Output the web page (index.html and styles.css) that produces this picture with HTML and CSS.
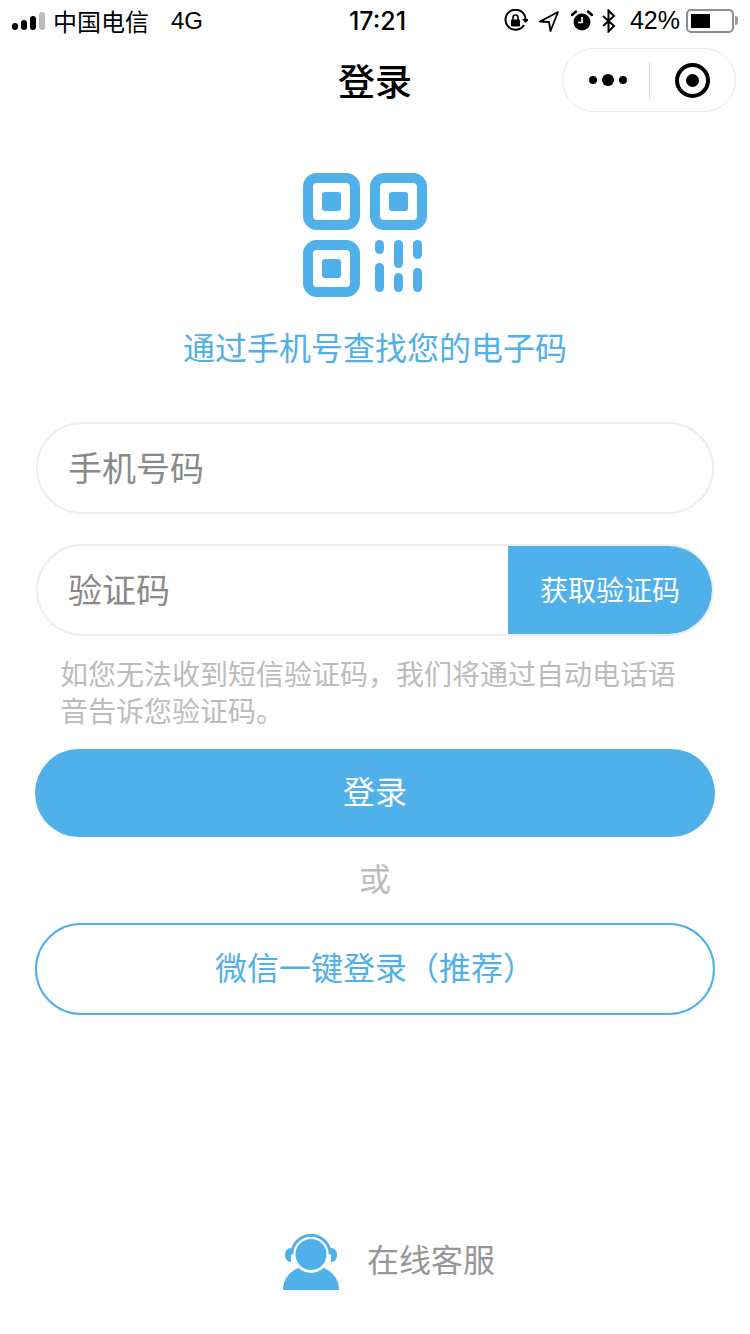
FILE: index.html
```html
<!DOCTYPE html>
<html lang="zh-CN">
<head>
    <meta charset="UTF-8">
    <title>登录</title>
    <link rel="stylesheet" href="styles.css">
</head>
<body>
    <!-- 状态栏 -->
    <div class="status-bar">
        <div class="status-left">
            <svg class="signal" width="34" height="20" viewBox="0 0 34 20">
                <rect x="0" y="12" width="6" height="7" rx="3" fill="#000"/>
                <rect x="9" y="9" width="6" height="10" rx="3" fill="#000"/>
                <rect x="18" y="5" width="6" height="14" rx="3" fill="#000"/>
                <rect x="27" y="1" width="6" height="18" rx="3" fill="#bbb"/>
            </svg>
            <span class="carrier">中国电信</span>
            <span class="network">4G</span>
        </div>
        <div class="status-time">17:21</div>
        <div class="status-right">
            <svg width="24" height="24" viewBox="0 0 24 24">
                <path d="M20 16A10 10 0 1 1 21.500 10" fill="none" stroke="#000" stroke-width="2"/>
                <path d="M18 10h7l-3.500 4z" fill="#000"/>
                <rect x="7" y="10.500" width="9" height="7" rx="1" fill="#000"/>
                <path d="M9 11V8.500a2.500 2.500 0 0 1 5 0V11" fill="none" stroke="#000" stroke-width="1.600"/>
            </svg>
            <svg class="icon-loc" width="20" height="22" viewBox="0 0 20 22">
                <path d="M19 2 1 11.500l9 .5 1.500 9z" fill="none" stroke="#000" stroke-width="1.800" stroke-linejoin="round"/>
            </svg>
            <svg class="icon-alarm" width="22" height="22" viewBox="0 0 22 22">
                <circle cx="11" cy="12" r="8.500" fill="#000"/>
                <path d="M11 7v5.500H7" fill="none" stroke="#fff" stroke-width="1.600"/>
                <path d="M1 5 5 1.500M21 5 17 1.500" stroke="#000" stroke-width="2.400" stroke-linecap="round"/>
            </svg>
            <svg class="icon-bt" width="14" height="24" viewBox="0 0 14 24">
                <path d="M1 7 12 17 6.500 22.500V1.500L12 7 1 17" fill="none" stroke="#000" stroke-width="2"/>
            </svg>
            <span class="battery-text">42%</span>
            <div class="battery">
                <div class="battery-level"></div>
            </div>
            <div class="battery-tip"></div>
        </div>
    </div>

    <!-- 导航栏 -->
    <div class="nav-bar">
        <h1 class="nav-title">登录</h1>
        <div class="capsule">
            <div class="capsule-dots">
                <span class="dot"></span>
                <span class="dot dot-big"></span>
                <span class="dot"></span>
            </div>
            <div class="capsule-line"></div>
            <div class="capsule-target">
                <span class="target-inner"></span>
            </div>
        </div>
    </div>

    <div class="logo-block">
        <svg class="qr-logo" width="124" height="124" viewBox="0 0 124 124">
            <g fill="none" stroke="#4fb0ea" stroke-width="10">
                <rect x="5" y="5" width="47" height="47" rx="9"/>
                <rect x="72" y="5" width="47" height="47" rx="9"/>
                <rect x="5" y="72" width="47" height="47" rx="9"/>
            </g>
            <g fill="#4fb0ea">
                <rect x="19" y="19" width="19" height="19" rx="3"/>
                <rect x="86" y="19" width="19" height="19" rx="3"/>
                <rect x="19" y="86" width="19" height="19" rx="3"/>
                <rect x="72" y="67" width="9" height="14" rx="4.500"/>
                <rect x="72" y="90" width="9" height="29" rx="4.500"/>
                <rect x="91" y="67" width="9" height="28" rx="4.500"/>
                <rect x="91" y="100" width="9" height="19" rx="4.500"/>
                <rect x="110" y="67" width="9" height="19" rx="4.500"/>
                <rect x="110" y="95" width="9" height="24" rx="4.500"/>
            </g>
        </svg>
        <p class="logo-text">通过手机号查找您的电子码</p>
    </div>

    <form class="login-form">
        <div class="field">
            <span class="placeholder">手机号码</span>
        </div>
        <div class="field field-code">
            <span class="placeholder">验证码</span>
            <button type="button" class="code-btn">获取验证码</button>
        </div>
        <p class="hint">如您无法收到短信验证码，我们将通过自动电话语音告诉您验证码。</p>
        <button type="button" class="btn btn-primary">登录</button>
        <div class="or">或</div>
        <button type="button" class="btn btn-outline">微信一键登录（推荐）</button>
    </form>

    <div class="service">
        <svg width="56" height="56" viewBox="0 0 56 56">
            <path d="M0 56C0 44 8 36 18 33H38C48 36 56 44 56 56z" fill="#4fb0ea"/>
            <circle cx="28" cy="20.500" r="18.500" fill="#fff"/>
            <circle cx="28" cy="20.500" r="15.500" fill="#4fb0ea"/>
            <path d="M8.800 20.500a19.200 19.200 0 0 1 38.400 0" fill="none" stroke="#4fb0ea" stroke-width="3"/>
            <path d="M8 14v14C4 28 2 24.500 2 21S4 14 8 14z" fill="#4fb0ea"/>
            <path d="M48 14v14c4 0 6-3.500 6-7s-2-7-6-7z" fill="#4fb0ea"/>
        </svg>
        <span class="service-text">在线客服</span>
    </div>
</body>
</html>
```

FILE: styles.css
```css
/* 页面 */
* {
    box-sizing: border-box;
}
body {
    margin: 0;
    width: 750px;
    height: 1334px;
    overflow: hidden;
    background-color: #fff;
    font-family: "Noto Sans CJK SC", "Noto Sans", sans-serif;
    color: #000;
}

/* 状态栏 */
.status-bar {
    display: flex;
    justify-content: space-between;
    align-items: center;
    height: 40px;
    padding: 1px 12px 0;
    position: relative;
    font-family: "Liberation Sans", "Noto Sans CJK SC", sans-serif;
    font-size: 24px;
}
.status-left {
    display: flex;
    align-items: center;
}
.carrier {
    margin-left: 7px;
    font-family: "Noto Sans CJK SC", sans-serif;
}
.network {
    margin-left: 22px;
}
.status-time {
    position: absolute;
    left: 5px;
    right: 0;
    text-align: center;
    font-family: Inter, sans-serif;
    font-size: 25px;
    font-weight: 500;
}
.status-right {
    display: flex;
    align-items: center;
}
.icon-loc {
    margin-left: 11px;
}
.icon-alarm {
    margin-left: 12px;
}
.icon-bt {
    margin-left: 9px;
}
.battery-text {
    margin-left: 14px;
    font-size: 25px;
}
.battery {
    width: 48px;
    height: 24px;
    margin-left: 6px;
    padding: 3px;
    border: 2px solid #8e8e8e;
    border-radius: 5px;
}
.battery-level {
    width: 19px;
    height: 100%;
    background-color: #000;
}
.battery-tip {
    width: 3px;
    height: 9px;
    margin-left: 1px;
    background-color: #999;
    border-radius: 0 3px 3px 0;
}

/* 导航栏 */
.nav-bar {
    height: 88px;
    position: relative;
    display: flex;
    justify-content: center;
    align-items: center;
}
.nav-title {
    margin: 0 0 8px;
    font-size: 37px;
    font-weight: 500;
    line-height: 1;
}
.capsule {
    position: absolute;
    top: 8px;
    right: 14px;
    width: 174px;
    height: 64px;
    display: flex;
    align-items: center;
    border: 1px solid #eaeaea;
    border-radius: 32px;
    background-color: #fff;
}
.capsule-dots {
    width: 86px;
    padding-left: 4px;
    display: flex;
    justify-content: center;
    align-items: center;
    gap: 5px;
}
.dot {
    width: 8px;
    height: 8px;
    border-radius: 50%;
    background-color: #000;
}
.dot-big {
    width: 12px;
    height: 12px;
}
.capsule-line {
    width: 1px;
    height: 37px;
    background-color: #d8d8d8;
}
.capsule-target {
    width: 35px;
    height: 35px;
    margin-left: 25px;
    display: flex;
    justify-content: center;
    align-items: center;
    border: 4px solid #000;
    border-radius: 50%;
}
.target-inner {
    width: 13px;
    height: 13px;
    border-radius: 50%;
    background-color: #000;
}

/* 图标和标题 */
.logo-block {
    display: flex;
    flex-direction: column;
    align-items: center;
    padding-top: 45px;
}
.qr-logo {
    display: block;
    margin-right: 20px;
}
.logo-text {
    margin: 24px 0 0;
    font-size: 32px;
    line-height: 50px;
    color: #4fb0ea;
}

/* 表单 */
.login-form {
    padding: 0 35px;
    margin-top: 51px;
}
.field {
    height: 92px;
    margin: 0 1px 30px;
    padding-left: 30px;
    display: flex;
    align-items: center;
    justify-content: space-between;
    border: 2px solid #eee;
    border-radius: 46px;
    overflow: hidden;
}
.placeholder {
    padding-bottom: 4px;
    font-size: 34px;
    color: #8a8a8a;
}
.code-btn {
    width: 204px;
    height: 100%;
    padding: 0 0 2px;
    border: none;
    background-color: #4fb0ea;
    color: #fff;
    font-family: inherit;
    font-size: 28px;
}
.hint {
    margin: -11px 25px 0;
    font-size: 28px;
    line-height: 37px;
    color: #bcbcbc;
}
.btn {
    display: block;
    width: 100%;
    padding: 0 0 7px;
    font-family: inherit;
    font-size: 32px;
    border-radius: 46px;
}
.btn-primary {
    height: 88px;
    margin-top: 20px;
    border: none;
    background-color: #4fb0ea;
    color: #fff;
}
.or {
    margin-top: 19px;
    height: 42px;
    line-height: 42px;
    text-align: center;
    font-size: 32px;
    color: #bcbcbc;
}
.btn-outline {
    height: 92px;
    margin-top: 25px;
    border: 2px solid #4fb0ea;
    background-color: #fff;
    color: #4fb0ea;
}

/* 在线客服 */
.service {
    display: flex;
    justify-content: center;
    align-items: center;
    margin-top: 219px;
    padding-left: 28px;
    gap: 28px;
}
.service-text {
    padding-bottom: 8px;
    font-size: 32px;
    color: #969696;
}
```
